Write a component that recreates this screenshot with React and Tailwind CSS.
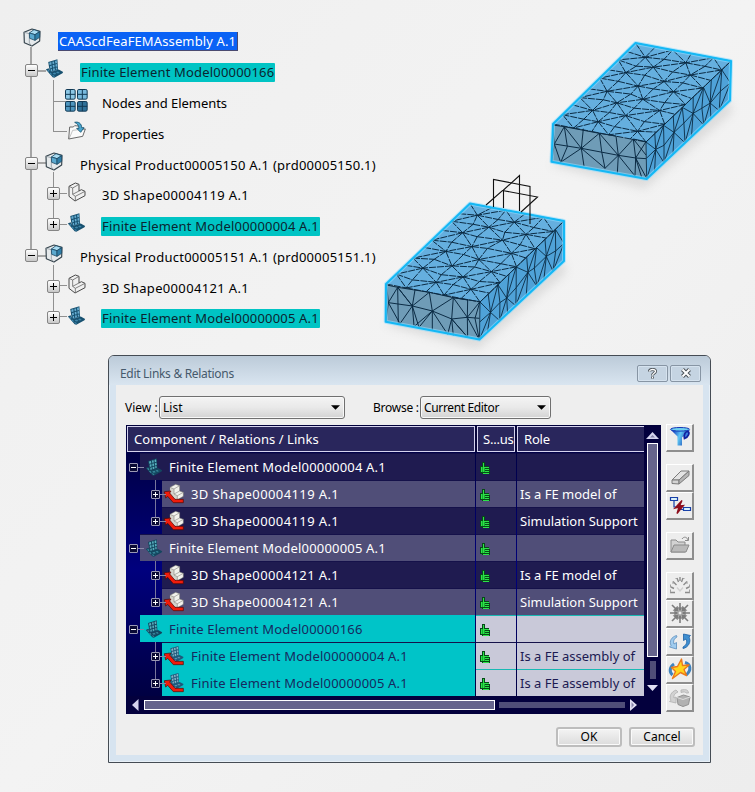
import React from "react";

/* ---------- finite element boxes ---------- */

const lerp = (a, b, t) => [a[0] + (b[0] - a[0]) * t, a[1] + (b[1] - a[1]) * t];
const quad = (a, b, c, d, u, v) => lerp(lerp(a, b, u), lerp(d, c, u), v);
const wobble = (n) => {
  const s = Math.sin(n * 12.9898) * 43758.5453;
  return s - Math.floor(s) - 0.5;
};

// Triangulated grid on the quad a-b-c-d, as one path string.
function meshPath(a, b, c, d, nu, nv, seed, amount) {
  const pts = [];
  for (let j = 0; j <= nv; j++) {
    pts.push([]);
    for (let i = 0; i <= nu; i++) {
      const inU = i > 0 && i < nu;
      const inV = j > 0 && j < nv;
      const u = (i + (inU ? wobble(seed + i * 7 + j * 13) * amount : 0)) / nu;
      const v = (j + (inV ? wobble(seed + i * 17 + j * 5 + 3) * amount : 0)) / nv;
      pts[j].push(quad(a, b, c, d, u, v));
    }
  }
  let path = "";
  const line = (p, q) => {
    path += `M${p[0].toFixed(1)} ${p[1].toFixed(1)}L${q[0].toFixed(1)} ${q[1].toFixed(1)}`;
  };
  for (let j = 0; j <= nv; j++) {
    for (let i = 0; i <= nu; i++) {
      if (i < nu) line(pts[j][i], pts[j][i + 1]);
      if (j < nv) line(pts[j][i], pts[j + 1][i]);
      if (i < nu && j < nv) {
        if ((i + j) % 2 === 0) line(pts[j][i], pts[j + 1][i + 1]);
        else line(pts[j][i + 1], pts[j + 1][i]);
      }
    }
  }
  return path;
}

const FRONT_A =
  "M35 360L40 413 33 470M68 367L40 413 75 476M35 360L68 367 112 423 75 476M68 367L70 476M68 367L163 382M68 367L112 423 40 413M120 375L112 423 163 382 172 438 112 423 132 487 172 438 118 484M112 423L117 482M163 382L235 398 172 438M172 438L172 495M172 438L230 462 218 508M172 438L218 508M235 398L230 462 277 457 235 398 315 410 277 457 278 517 230 462 235 512M230 462L278 517M277 457L313 460M277 457L313 524M235 398L278 405 277 457M315 410L300 460 313 524";
const FRONT_B =
  "M38 285L43 342 35 395M73 290L43 342 62 397M38 285L73 290 124 355 43 342M73 290L82 350 62 397M73 290L178 310 124 355 60 398M124 355L130 296M124 355L132 408M124 355L195 415M124 355L235 376 178 310 185 365 195 415 235 376M178 310L228 318 235 376 280 327 318 335 287 384 235 376 232 430M235 376L285 438M280 327L287 384 285 438M287 384L318 386M287 384L305 442M287 384L320 445M280 327L318 375";

function FeBox({ p, origin, front, seed }) {
  const { bl, br, brb, frb, fr, fl, flb } = p;
  const s = (...a) => a.map((q) => q.join(",")).join(" ");
  return (
    <g>
      <polygon points={s([flb[0] - 2, flb[1] + 3], [frb[0] - 2, frb[1] + 10], [brb[0] + 2, brb[1] + 12], brb)} fill="#8d8d8d" opacity="0.22" filter="url(#soft)" />
      <polygon points={s(bl, br, fr, fl)} fill="#65afdf" />
      <polygon points={s(fl, fr, frb, flb)} fill="#6f9cb7" />
      <polygon points={s(fr, br, brb, frb)} fill="#4fa2d8" />
      <g stroke="#0b2b44" strokeWidth="1" fill="none">
        <path d={meshPath(bl, br, fr, fl, 5, 9, seed, 0.34)} strokeDasharray="7 1" />
        <path d={meshPath(fr, br, brb, frb, 9, 2, seed + 40, 0.35)} strokeWidth="0.9" />
        <path d={front} strokeWidth="3" transform={`translate(${origin[0]} ${origin[1]}) scale(0.3333)`} />
      </g>
      <polygon points={s(bl, br, brb, frb, flb, fl)} fill="none" stroke="#8fdcff" strokeWidth="4" opacity="0.6" strokeLinejoin="round" />
      <polygon points={s(bl, br, brb, frb, flb, fl)} fill="none" stroke="#14b8f5" strokeWidth="2" strokeLinejoin="round" />
    </g>
  );
}

const BOX_A = { bl: [470, 203.5], br: [564, 221], brb: [564, 261], frb: [479.5, 339.5], fr: [480, 302], fl: [386, 284], flb: [385.7, 321.7] };
const BOX_B = { bl: [635.5, 43], br: [731, 61], brb: [730, 100.5], frb: [646.7, 179], fr: [646, 142], fl: [553, 124], flb: [551.5, 161.7] };

function Viewport() {
  return (
    <svg className="pointer-events-none absolute inset-0" width="755" height="792" viewBox="0 0 755 792">
      <defs>
        <filter id="soft" x="-20%" y="-20%" width="140%" height="150%">
          <feGaussianBlur stdDeviation="5" />
        </filter>
      </defs>
      <FeBox p={BOX_B} origin={[540, 30]} front={FRONT_B} seed={11} />
      <FeBox p={BOX_A} origin={[375, 165]} front={FRONT_A} seed={29} />
      <g fill="none" stroke="#111" strokeWidth="1.1">
        <path d="M493.500 207V179.500L530 186.500V224" />
        <path d="M486 205L502.500 190.500L537.500 197L521 212" />
        <path d="M519.500 211V175.500L503.500 190V208" />
      </g>
    </svg>
  );
}

/* ---------- icons ---------- */

function ProductIcon() {
  return (
    <svg width="18" height="19" viewBox="0 0 54 57">
      <path d="M3 13L27 3 51 10 50 39 27 54 4 44Z" fill="#e6eaec" stroke="#36444d" strokeWidth="3.500" strokeLinejoin="round" />
      <path d="M3 13L19 17V45L27 54" fill="none" stroke="#7d8a92" strokeWidth="2" />
      <path d="M19 15L33 5 50 11 36 20Z" fill="#a9dcf2" stroke="#1d4a66" strokeWidth="2.500" />
      <path d="M19 15L36 20V37L20 31Z" fill="#5ba9cf" stroke="#1d4a66" strokeWidth="2.500" />
      <path d="M36 20L50 11V28L36 37Z" fill="#2f7fa9" stroke="#1d4a66" strokeWidth="2.500" />
    </svg>
  );
}

// Upright meshed panel standing on a meshed floor.
function MeshArt({ dark, light, floor }) {
  return (
    <g>
      <path d="M2 31L10 27 16 38 40 31 53 38 51 42 27 55 22 54Z" fill={dark} />
      <g fill={floor}>
        <path d="M6 33L10 31 13 36 10 38ZM12 41L16 40 20 45 17 47ZM22 42L29 40 33 44 26 46ZM32 39L38 37 43 41 37 43ZM20 48L25 48 29 51 26 53Z" />
      </g>
      <path d="M9 9L36 1 38 32 14 40Z" fill={dark} />
      <g fill={light}>
        <path d="M12 11L18 9 19 16 13 18ZM21 8L26 7 27 14 22 15ZM29 6L34 4 35 12 30 13Z" />
        <path d="M14 21L19 19 20 26 15 28ZM22 18L27 17 28 24 23 25ZM30 16L35 15 36 22 31 23Z" />
        <path d="M16 31L20 29 21 35 17 37ZM23 28L28 27 29 33 24 35ZM31 26L35 25 36 30 32 32Z" />
      </g>
    </g>
  );
}

function MeshIcon({ size = 19, dark = "#17506f", light = "#66acd0", floor = "#3f86ab" }) {
  return (
    <svg width={size} height={size} viewBox="0 0 55 56">
      <MeshArt dark={dark} light={light} floor={floor} />
    </svg>
  );
}

function NodesIcon() {
  const cell = (x, y, c) => (
    <g key={`${x}-${y}`}>
      <rect x={x} y={y} width="29" height="29" rx="4" fill={c} stroke="#123a55" strokeWidth="3" />
      <path d={`M${x + 14.5} ${y}v29M${x} ${y + 14.5}h29`} stroke="#123a55" strokeWidth="3" />
    </g>
  );
  return (
    <svg width="23" height="23" viewBox="0 0 69 69">
      {cell(1.5, 1.5, "#8cc8e6")}
      {cell(37.5, 1.5, "#78bade")}
      {cell(1.5, 37.5, "#4f96bf")}
      {cell(37.5, 37.5, "#2f7199")}
    </svg>
  );
}

function PropertiesIcon() {
  return (
    <svg width="18" height="19" viewBox="0 0 54 57">
      <path d="M2 54L5 18H16L20 14 38 16V24H52L44 46Z" fill="#fbfbfb" stroke="#4e4e4e" strokeWidth="2.500" />
      <path d="M3 54L14 28 52 24" fill="none" stroke="#8a8a8a" strokeWidth="1.500" />
      <path d="M20 4C32 1 41 8 41 20H48L38 34 26 22H33C32 13 28 8 20 4Z" fill="#4aa6cf" stroke="#15506e" strokeWidth="2.500" />
    </svg>
  );
}

function ShapeIcon() {
  return (
    <svg width="18" height="20" viewBox="0 0 54 60">
      <path d="M3 13L22 3 33 7V27L40 23 51 28V41L21 57 3 43Z" fill="#f0f0f0" stroke="#4a4a4a" strokeWidth="3" strokeLinejoin="round" />
      <path d="M3 13L14 18 33 7M14 18V37L22 43 51 28M14 37L33 27M22 43V57" fill="none" stroke="#6a6a6a" strokeWidth="2.500" />
    </svg>
  );
}

function LinkedIcon({ mesh }) {
  return (
    <svg width="22" height="22" viewBox="0 0 66 66" className="shrink-0">
      {mesh ? (
        <g transform="translate(14 2) scale(0.9)">
          <MeshArt dark="#1f587a" light="#86b3c6" floor="#5c93ad" />
        </g>
      ) : (
        <g strokeLinejoin="round">
          <path d="M21 13L38 4 50 8 50 24 61 28 61 40 42 51 22 38Z" fill="#f2f2ec" stroke="#6f6e68" strokeWidth="1.500" />
          <path d="M21 13L33 18 33 33 43 38 42 51 22 38Z" fill="#d4d3cb" />
          <path d="M21 13L33 18 50 8M33 18V33L43 38 61 28M33 33L50 24M43 38V48" stroke="#8e8d86" strokeWidth="2" fill="none" />
        </g>
      )}
      <path d="M4 26L24 24 20 30 36 49H61V59H31L14 40 8 45Z" fill="#f01c0c" stroke="#4a0805" strokeWidth="2" strokeLinejoin="round" />
    </svg>
  );
}

function ThumbIcon() {
  return (
    <svg width="12" height="14" viewBox="0 0 12 14" shapeRendering="crispEdges">
      <path d="M1 5h2V1h3v4h4v2h1v6H3v-1H1z" fill="#064a17" />
      <path d="M2 6h1v5H2zM4 2h1v9H4zM5 6h5v1H5zM6 8h4v1H6zM6 10h4v1H6zM4 12h6v0.500H4z" fill="#2be348" />
      <path d="M3 6h1v5H3zM5 7h1v4H5z" fill="#17a930" />
    </svg>
  );
}

/* ---------- specification tree ---------- */

const TREE = [
  { level: 0, icon: "product", text: "CAAScdFeaFEMAssembly A.1", look: "picked", track: "tracking-[0.12px]" },
  { level: 1, icon: "mesh", box: "-", text: "Finite Element Model00000166", look: "fem", track: "tracking-[0.18px]" },
  { level: 2, icon: "nodes", text: "Nodes and Elements", track: "tracking-[-0.04px]" },
  { level: 2, icon: "props", text: "Properties", track: "tracking-[-0.1px]", end: true },
  { level: 1, icon: "product", box: "-", text: "Physical Product00005150 A.1 (prd00005150.1)", track: "tracking-[0.25px]" },
  { level: 2, icon: "shape", box: "+", text: "3D Shape00004119 A.1", track: "tracking-[0.34px]" },
  { level: 2, icon: "mesh", box: "+", text: "Finite Element Model00000004 A.1", look: "fem", track: "tracking-[0.19px]", end: true },
  { level: 1, icon: "product", box: "-", text: "Physical Product00005151 A.1 (prd00005151.1)", track: "tracking-[0.25px]", last: true },
  { level: 2, icon: "shape", box: "+", text: "3D Shape00004121 A.1", track: "tracking-[0.34px]", bare: true },
  { level: 2, icon: "mesh", box: "+", text: "Finite Element Model00000005 A.1", look: "fem", track: "tracking-[0.19px]", end: true, bare: true },
];

const ICONS = {
  product: <ProductIcon />,
  mesh: <MeshIcon />,
  nodes: <NodesIcon />,
  props: <PropertiesIcon />,
  shape: <ShapeIcon />,
};

function Expander({ sign }) {
  return (
    <span className="relative z-10 block h-[13px] w-[13px] rounded-[2px] border border-[#858585] bg-gradient-to-b from-white to-[#c8c8c8]">
      <i className="absolute top-[5px] left-[2px] h-px w-[7px] bg-black" />
      {sign === "+" && <i className="absolute top-[2px] left-[5px] h-[7px] w-px bg-black" />}
    </span>
  );
}

function TreeRow({ row }) {
  const { level, icon, box, text, look, track } = row;
  const tone =
    look === "picked"
      ? "bg-[#0a62f5] text-white border-r border-b border-[#4a4a70]"
      : look === "fem"
        ? "bg-[#00c4c4] text-[#0b2430] rounded-[1px]"
        : "mt-px text-black";
  return (
    <div className="relative flex h-[30.8px] items-center">
      {level === 0 && <i className="absolute top-[21px] left-[30px] h-[10px] w-[2px] bg-[#a5a5a5]" />}
      {level > 0 && !row.bare && (
        <i className={`absolute top-0 left-[30px] w-[2px] bg-[#a5a5a5] ${row.last ? "h-[12px]" : "h-[31px]"}`} />
      )}
      {level === 1 && <i className="absolute top-[13px] left-[38px] h-[2px] w-[8px] bg-[#a5a5a5]" />}
      {level === 1 && <i className="absolute top-[23px] left-[53px] h-[8px] w-px bg-[#909090]" />}
      {level === 2 && <i className={`absolute top-0 left-[53px] w-px bg-[#909090] ${row.end ? "h-[14px]" : "h-[31px]"}`} />}
      {level === 2 && <i className="absolute top-[13px] left-[53px] h-px w-[14px] bg-[#909090]" />}
      <span className={`flex shrink-0 justify-end pb-[3px] ${level === 0 ? "w-[18px]" : level === 1 ? "w-[38px]" : "w-[60px]"}`}>
        {box && <Expander sign={box} />}
      </span>
      <span className={`relative flex shrink-0 items-center justify-center ${icon === "nodes" ? "pb-[5px]" : "pb-[7px]"} ${level === 0 ? "w-[28px]" : icon === "product" ? "w-[32px] pr-px" : "w-[33px]"}`}>
        {ICONS[icon]}
      </span>
      <span className={`${level === 0 ? "ml-[12px]" : level === 1 && !look ? "ml-[9px]" : level === 1 ? "ml-[9px]" : "ml-[8px]"} h-[19px] whitespace-nowrap px-px text-[13px] leading-[19px] ${tone} ${track}`}>{text}</span>
    </div>
  );
}

/* ---------- dialog ---------- */

const ROWS = [
  { level: 0, text: "Finite Element Model00000004 A.1", role: "", bg: "bg-[#1f1b50]" },
  { level: 1, text: "3D Shape00004119 A.1", role: "Is a FE model of", bg: "bg-[#504e78]", wide: true },
  { level: 1, text: "3D Shape00004119 A.1", role: "Simulation Support", bg: "bg-[#1f1b50]", wide: true },
  { level: 0, text: "Finite Element Model00000005 A.1", role: "", bg: "bg-[#504e78]" },
  { level: 1, text: "3D Shape00004121 A.1", role: "Is a FE model of", bg: "bg-[#1f1b50]", wide: true },
  { level: 1, text: "3D Shape00004121 A.1", role: "Simulation Support", bg: "bg-[#504e78]", wide: true },
  { level: 0, text: "Finite Element Model00000166", role: "", fem: true },
  { level: 1, text: "Finite Element Model00000004 A.1", role: "Is a FE assembly of", fem: true },
  { level: 1, text: "Finite Element Model00000005 A.1", role: "Is a FE assembly of", fem: true },
];

function MiniBox({ sign }) {
  return (
    <span className="relative z-10 block h-[9px] w-[9px] shrink-0 rounded-[1px] border border-[#9a98b4] bg-[#0a0a35]">
      <i className="absolute top-[3px] left-[1px] h-px w-[5px] bg-white" />
      {sign === "+" && <i className="absolute top-px left-[3px] h-[5px] w-px bg-white" />}
    </span>
  );
}

function TableRow({ row, index }) {
  const next = ROWS[index + 1];
  const main = row.fem ? "bg-[#00c4c8] text-[#16295e]" : `${row.bg} text-white`;
  const side = row.fem ? "bg-[#c9c9d9] text-[#1c1a52]" : `${row.bg} text-white`;
  const edge = !row.fem || index === 7 ? "border-[#15114a]" : "border-[#19b9b4]";
  const mainEdge = row.fem && index !== 7 ? "border-[#00c4c8]" : "border-[#15114a]";
  return (
    <div className="flex h-[27px] text-[13px]">
      <div className="relative flex w-[348px] shrink-0">
        <span className={`flex shrink-0 items-center pt-[2px] ${row.level === 0 ? "w-[13px] pl-[2px]" : "w-[35px] pl-[24px]"}`}>
          <MiniBox sign={row.level === 0 ? "-" : "+"} />
        </span>
        {row.level === 1 && (
          <i className={`absolute top-0 left-[28px] w-px bg-[#77759c] ${next && next.level === 1 ? "h-[27px]" : "h-[13px]"}`} />
        )}
        <div className={`relative flex flex-1 items-center border-t ${mainEdge} ${main}`}>
          <i className="absolute top-[13px] left-[-2px] h-px w-[6px] bg-[#8886a6]" />
          {row.level === 0 ? (
            <span className="flex w-[29px] shrink-0 justify-center pt-px pr-px">
              <MeshIcon size={18} dark="#14465f" light="#57aebd" floor="#38889c" />
            </span>
          ) : (
            <span className="flex w-[29px] shrink-0 pt-px pl-px">
              <LinkedIcon mesh={row.fem} />
            </span>
          )}
          <span className={`pt-[2px] whitespace-nowrap ${row.wide ? "tracking-[0.4px]" : "tracking-[0.19px]"}`}>{row.text}</span>
        </div>
      </div>
      <div className={`ml-px flex w-[40px] shrink-0 items-center border-t pt-[2px] pl-[3px] ${side} ${edge}`}>
        <ThumbIcon />
      </div>
      <div className={`ml-px flex flex-1 items-center border-t pt-[2px] pl-[3px] whitespace-nowrap ${side} ${edge}`}>{row.role}</div>
    </div>
  );
}

const gray = { fill: "none", stroke: "#8c8c8c", strokeWidth: 1.4 };

const TOOLS = [
  {
    gap: "mt-0",
    art: (
      <g>
        <defs>
          <linearGradient id="funnel" x1="0" x2="1" y1="0.300" y2="0.600">
            <stop offset="0" stopColor="#0b2ab8" />
            <stop offset="0.450" stopColor="#5fc8f5" />
            <stop offset="1" stopColor="#0a1f9e" />
          </linearGradient>
        </defs>
        <path d="M2.500 4.500L9.500 11.500V20.500H14V12.500L22 5Z" fill="url(#funnel)" />
        <ellipse cx="12" cy="4.300" rx="9.500" ry="1.800" fill="#6fd0f0" stroke="#1238b8" strokeWidth="1" />
        <path d="M16.500 13.500C15.500 9 17.500 6.500 20 6.500C22 7.500 20.500 12 16.500 13.500Z" fill="#3a7fe0" stroke="#10209e" strokeWidth="1.700" />
      </g>
    ),
  },
  {
    gap: "mt-[12px]",
    art: (
      <g stroke="#7a7a7a" strokeWidth="1" strokeLinejoin="round">
        <path d="M4 15L13 6H21L11 15Z" fill="#e3e3e3" />
        <path d="M4 15H11V19L4 18.500Z" fill="#d4d4d4" />
        <path d="M11 15L21 6V10.500L11 19Z" fill="#b6b6b6" />
      </g>
    ),
  },
  {
    gap: "mt-0",
    art: (
      <g>
        <path d="M2.500 4.500H9.500V7.500H2.500ZM15.500 14.500H22.500V17.500H15.500ZM6 7.500V14H8M12 16.500H15" fill="#d9f1fb" stroke="#1740a8" strokeWidth="1.200" />
        <path d="M14 7.500L7 15L11 14L9 20.500L15.500 12.500L11.500 13Z" fill="#8d0d1c" stroke="#8d0d1c" strokeWidth="1.300" />
      </g>
    ),
  },
  {
    gap: "mt-[12px]",
    art: (
      <g stroke="#8b8b8b" strokeWidth="1" strokeLinejoin="round">
        <path d="M3 19V7H8L10 9H17V19Z" fill="#d2d2d2" />
        <path d="M3 19L6 12H21L18 19Z" fill="#bababa" />
        <path d="M14 6C16 3 19 4 20 7M20.500 4V7.500H17" fill="none" />
      </g>
    ),
  },
  {
    gap: "mt-[12px]",
    art: (
      <g {...gray}>
        <path d="M2 19.500H7M17 19.500H22M3 14L6 15.500M21 14L18 15.500M5 8.500L8.500 12M19 8.500L15.500 12M9 5L10.500 9M15 5L13.500 9M12 4V8" />
        <path d="M2.500 16.500V19.500M21.500 16.500V19.500M2.500 11.500V14.500M21.500 11.500V14.500M5 8.500V11M19 8.500V11M7.500 5.500H9M16.500 5.500H15" stroke="#a0a0a0" strokeWidth="1" />
        <path d="M9 14.500L12 18L15 14.500" stroke="#d0d0d0" />
      </g>
    ),
  },
  {
    gap: "mt-0",
    art: (
      <g stroke="#7c7c7c" strokeWidth="1.600" fill="#7c7c7c">
        <path d="M12 2V7M12 17V22M2 12H7M17 12H22M4 4L8 8M20 4L16 8M4 20L8 16M20 20L16 16" />
        <path d="M10 6.500H14L12 11ZM10 17.500H14L12 13ZM6.500 10V14L11 12ZM17.500 10V14L13 12Z" strokeWidth="0.300" />
        <path d="M10.800 10.800L5 9.500L9.500 5ZM13.200 10.800L19 9.500L14.500 5ZM10.800 13.200L5 14.500L9.500 19ZM13.200 13.200L19 14.500L14.500 19Z" strokeWidth="0.300" />
      </g>
    ),
  },
  {
    gap: "mt-0",
    art: (
      <g>
        <path d="M8.500 6.500C3.500 8 1 12 3 16.500L1.500 18L8.500 20V13.500L6 15C5 12 6 9.500 9 8Z" fill="#9fcbee" stroke="#5b8dbb" strokeWidth="0.800" />
        <path d="M15 19.500C20.500 18.500 23.500 12.500 21 8L22.500 6.500L15.500 5V11.500L18 10C19.500 13 18.500 16 15 18Z" fill="#3f8fd0" stroke="#1c5fa5" strokeWidth="0.800" />
      </g>
    ),
  },
  {
    gap: "mt-0",
    art: (
      <g>
        <path d="M6 7C1.500 10 1 15 4.500 18M17 5.500C22.500 7 24 13 18 18" fill="none" stroke="#3f83bf" strokeWidth="3" />
        <path d="M13.500 2L14.500 8.500L21 8L16 12.500L18.500 18.500L12.500 15.500L4.500 21.500L7.500 14.500L3.500 10.500L9.500 9.500Z" fill="#ffd51c" stroke="#ec7a1c" strokeWidth="1.400" strokeLinejoin="round" />
      </g>
    ),
  },
  {
    gap: "mt-0",
    art: (
      <g>
        <path d="M8 5C3 7 1 11 3 15.500L1.500 16.500L8 18V12L6 13C5.500 10.500 6.500 8.500 10 7ZM13 5C19 4 20 5 20.500 8H18C17.500 7 16 6.500 13 7.500Z" fill="#d2d2d2" stroke="#b0b0b0" strokeWidth="0.800" />
        <path d="M9 12.500L15.500 10L22 12L20.500 19.500L15 21.500L10 19.500Z" fill="#b2b2b2" stroke="#929292" strokeWidth="1" />
        <path d="M9 12.500L15 14.500L22 12" fill="none" stroke="#dcdcdc" strokeWidth="1" />
      </g>
    ),
  },
];

function Select({ label, width, track }) {
  return (
    <span className={`flex h-[23px] items-center justify-between rounded-[3px] border border-[#707070] bg-gradient-to-b from-[#f4f4f4] via-[#e9e9e9] to-[#d3d3d3] pr-[4px] pl-[3px] shadow-[inset_0_0_0_1px_#f8f8f8] ${width}`}>
      <span className={`pt-px ${track}`}>{label}</span>
      <svg width="9" height="5" viewBox="0 0 8 4"><path d="M0 0H8L4 4Z" fill="#000" /></svg>
    </span>
  );
}

function CaptionButton({ children }) {
  return (
    <span className="flex h-[17px] w-[31px] items-center justify-center rounded-[2px] border border-[#8795a4] bg-[#c5d4e2] shadow-[inset_0_0_0_1px_#d5e2ee]">
      {children}
    </span>
  );
}

function PushButton({ children }) {
  return (
    <span className="flex h-[20px] w-[66px] items-center justify-center rounded-[3px] border-2 border-[#bdbdbd] bg-gradient-to-b from-[#f4f4f4] to-[#dcdcdc] shadow-[inset_0_0_0_1px_#fafafa]">
      {children}
    </span>
  );
}

function Dialog() {
  return (
    <div className="relative mt-[21px] ml-[108px] flex h-[408px] w-[603px] flex-col rounded-t-[6px] border border-[#454c54] bg-[#d7e4f0] text-[12px] text-black shadow-[inset_0_0_0_1px_#e8f0f7]">
      <div className="flex h-[29px] shrink-0 items-center justify-between rounded-t-[5px] bg-gradient-to-b from-[#bccbd9] to-[#d9e5f0] pr-[9px] pl-[11px]">
        <span className="pt-[8px] tracking-[-0.3px] text-[#465a6c]">Edit Links &amp; Relations</span>
        <span className="flex gap-[2px] pt-[6px]">
          <CaptionButton>
            <svg width="9" height="11" viewBox="0 0 9 11"><path d="M1.500 3.500C1.500 0.800 7.500 0.800 7.500 3.500C7.500 5 4.500 5 4.500 7.500M4.500 8.500V10.500" fill="none" stroke="#4b5258" strokeWidth="3" /><path d="M1.500 3.500C1.500 0.800 7.500 0.800 7.500 3.500C7.500 5 4.500 5 4.500 7.500M4.500 8.700V10.200" fill="none" stroke="#fff" strokeWidth="1.300" /></svg>
          </CaptionButton>
          <CaptionButton>
            <svg width="12" height="10" viewBox="0 0 12 10"><path d="M2.500 1.500L9.500 8.500M9.500 1.500L2.500 8.500" stroke="#4b5258" strokeWidth="4" /><path d="M2.500 1.500L9.500 8.500M9.500 1.500L2.500 8.500" stroke="#fff" strokeWidth="2" /></svg>
          </CaptionButton>
        </span>
      </div>
      <div className="mx-[7px] mb-[7px] flex flex-1 flex-col bg-[#eeeeee]">
        <div className="flex h-[39px] items-center pt-[6px] pl-[9px]">
          <span className="w-[34px] pt-px whitespace-nowrap">View :</span>
          <Select label="List" width="w-[186px]" track="tracking-[0px]" />
          <span className="ml-[28px] w-[47px] pt-px whitespace-nowrap tracking-[-0.25px]">Browse :</span>
          <Select label="Current Editor" width="w-[131px]" track="tracking-[-0.35px]" />
        </div>
        <div className="flex pl-[10px]">
          <div className="mt-px flex h-[289px] w-[535px] flex-col bg-gradient-to-b from-[#00003a] via-[#00007e] to-[#00003a] pt-px pl-px">
            <div className="flex h-[270px]">
              <div className="w-[517px]">
                <div className="mb-px flex h-[26px] gap-[2px] bg-[#07053a] text-[13px] text-white">
                  <span className="flex w-[348px] items-center border border-[#d5d3ee] bg-[#29265c] pt-[2px] pl-[6px] whitespace-nowrap tracking-[0.06px]">Component / Relations / Links</span>
                  <span className="flex w-[38px] items-center overflow-hidden border border-[#d5d3ee] bg-[#29265c] pt-[2px] pl-[5px] whitespace-nowrap tracking-[-0.2px]">S...us</span>
                  <span className="flex flex-1 items-center border border-r-0 border-[#d5d3ee] bg-[#29265c] pt-[2px] pl-[6px] tracking-[-0.2px]">Role</span>
                </div>
                {ROWS.map((row, i) => (
                  <TableRow key={i} row={row} index={i} />
                ))}
              </div>
              <div className="flex flex-1 flex-col items-center bg-[#03003d]">
                <svg className="mt-[6px]" width="13" height="7" viewBox="0 0 13 7"><path d="M0 7L6.500 0L13 7Z" fill="#d5d3ee" /><path d="M4 5.500L6.500 3L9 5.500Z" fill="#8583a8" /></svg>
                <span className="mt-[4px] h-[214px] w-[11px] border border-white bg-[#66648c]" />
                <span className="mt-[4px] h-[18px] w-[6px] bg-[#504e78]" />
                <svg className="mt-[6px]" width="11" height="6" viewBox="0 0 11 6"><path d="M0 0L5.500 6L11 0Z" fill="#e2e0f4" /></svg>
              </div>
            </div>
            <div className="flex flex-1 items-center bg-[#03003d] pl-[5px]">
              <svg width="7" height="12" viewBox="0 0 7 12"><path d="M6.500 0V12L0 6Z" fill="#d5d3ee" /></svg>
              <span className="ml-[5px] h-[10px] w-[351px] border border-white bg-[#66648c]" />
              <span className="ml-[4px] h-[6px] w-[126px] bg-[#504e78]" />
              <svg className="ml-[5px]" width="7" height="12" viewBox="0 0 7 12"><path d="M0 0L7 6L0 12Z" fill="#e2e0f4" /><path d="M1.500 3L4 6L1.500 9Z" fill="#8583a8" /></svg>
            </div>
          </div>
          <div className="ml-[5px] flex flex-col">
            {TOOLS.map((t, i) => (
              <span key={i} className={`flex h-[28px] w-[28px] items-center justify-center border-t border-r-2 border-b-2 border-l border-t-white border-r-[#8e8e8e] border-b-[#8e8e8e] border-l-white bg-[#ededed] ${t.gap}`}>
                <svg width="24" height="24" viewBox="0 0 24 24">{t.art}</svg>
              </span>
            ))}
          </div>
        </div>
        <div className="mt-[13px] flex justify-end gap-[7px] pr-[8px]">
          <PushButton>OK</PushButton>
          <PushButton>Cancel</PushButton>
        </div>
      </div>
    </div>
  );
}

export default function App() {
  return (
    <div className="relative h-[792px] w-[755px] overflow-hidden bg-gradient-to-br from-[#efefef] via-[#f3f3f3] to-[#ededed] font-['Noto_Sans','Open_Sans',sans-serif]">
      <Viewport />
      <div className="pt-[26px]">
        {TREE.map((row, i) => (
          <TreeRow key={i} row={row} />
        ))}
      </div>
      <Dialog />
    </div>
  );
}
